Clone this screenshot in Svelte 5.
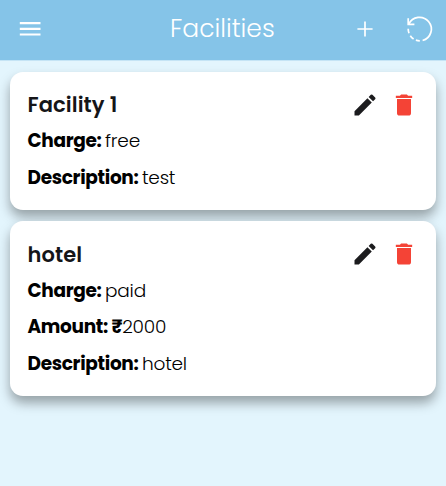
<script lang="ts">
	type Field = { label: string; value: string; rupee?: boolean };
	type Facility = { name: string; fields: Field[] };

	const facilities: Facility[] = [
		{
			name: 'Facility 1',
			fields: [
				{ label: 'Charge:', value: 'free' },
				{ label: 'Description:', value: 'test' }
			]
		},
		{
			name: 'hotel',
			fields: [
				{ label: 'Charge:', value: 'paid' },
				{ label: 'Amount:', value: '2000', rupee: true },
				{ label: 'Description:', value: 'hotel' }
			]
		}
	];
</script>

<div class="screen">
	<header>
		<button class="menu" aria-label="menu">
			<svg width="28" height="28" viewBox="0 0 28 28">
				<path d="M3.8 8.2h20.7M3.8 13.9h20.7M3.8 19.5h20.7" stroke="#fff" stroke-width="2.2" />
			</svg>
		</button>
		<h1>Facilities</h1>
		<button class="add" aria-label="add">
			<svg width="18" height="18" viewBox="0 0 18 18">
				<path d="M9 1.4v15.2M1.4 9h15.2" stroke="#fff" stroke-width="1.7" />
			</svg>
		</button>
		<button class="reload" aria-label="reload">
			<svg width="28" height="28" viewBox="0 0 28 28" fill="none" stroke="#fff" stroke-width="1.7">
				<path d="M2.8 9.2A11.8 11.8 0 1 1 16.6 25.5" />
				<path d="M2.2 3.2v6.2h6.2" />
				<path d="M13.8 25.8a11.8 11.8 0 0 1-3.9-.7M7.6 24a11.8 11.8 0 0 1-3.3-3.2M3 18.2a11.8 11.8 0 0 1-.8-4.4" />
			</svg>
		</button>
	</header>

	<main>
		{#each facilities as facility}
			<section class="card">
				<div class="top">
					<h2>{facility.name}</h2>
					<button class="edit" aria-label="edit">
						<svg width="28" height="28" viewBox="0 0 24 24" fill="#1c1c1e">
							<path d="M3 17.25V21h3.75L17.81 9.94l-3.75-3.75L3 17.25zM20.71 7.04a1 1 0 0 0 0-1.41l-2.34-2.34a1 1 0 0 0-1.41 0l-1.83 1.83 3.75 3.75 1.83-1.83z" />
						</svg>
					</button>
					<button class="delete" aria-label="delete">
						<svg width="28" height="28" viewBox="0 0 24 24" fill="#f44336">
							<path d="M6 19c0 1.1.9 2 2 2h8c1.1 0 2-.9 2-2V6.8H6V19zM19 4h-3.5l-1-1h-5l-1 1H5v2h14V4z" />
						</svg>
					</button>
				</div>
				{#each facility.fields as field}
					<p>
						<b>{field.label}</b>
						<span>{#if field.rupee}<b class="rupee">₹</b>{/if}{field.value}</span>
					</p>
				{/each}
			</section>
		{/each}
	</main>
</div>

<style>
	:global(body) {
		margin: 0;
		background: #e3f5fd;
	}
	.screen {
		min-height: 486px;
		background: #e3f5fd;
		font-family: Poppins, Inter, sans-serif;
		color: #000;
		overflow: hidden;
	}
	header {
		display: grid;
		grid-template-columns: 28px 1fr 18px 28px;
		align-items: center;
		height: 61px;
		padding: 0 12px 2px 16px;
		box-sizing: border-box;
		background: #85c4e8;
		border-bottom: 1px solid #c5e4f5;
	}
	button {
		display: block;
		padding: 0;
		border: 0;
		background: none;
	}
	svg {
		display: block;
	}
	h1 {
		margin: 0 0 0 126px;
		font-size: 25px;
		font-weight: 300;
		line-height: 36px;
		color: #fff;
	}
	.add {
		margin-left: -32px;
	}
	main {
		display: flex;
		flex-direction: column;
		gap: 11.5px;
		padding: 10.75px 10px 0 9.5px;
	}
	.card {
		padding: 14.5px 18px 13.5px;
		background: #fff;
		border-radius: 13px;
		box-shadow: 0 7px 12px rgba(0, 0, 0, 0.34);
	}
	.top {
		display: flex;
		align-items: center;
		height: 37px;
	}
	h2 {
		flex: 1;
		margin: 0;
		font-size: 21px;
		font-weight: 600;
		letter-spacing: 0.1px;
		color: #151518;
	}
	.delete {
		margin: 0 0.5px 0 10.5px;
	}
	p {
		display: flex;
		gap: 3.5px;
		margin: 0;
		font-size: 18.5px;
		font-weight: 300;
		line-height: 36.5px;
		letter-spacing: -0.2px;
	}
	p b {
		font-weight: 700;
		letter-spacing: -0.32px;
	}
</style>
